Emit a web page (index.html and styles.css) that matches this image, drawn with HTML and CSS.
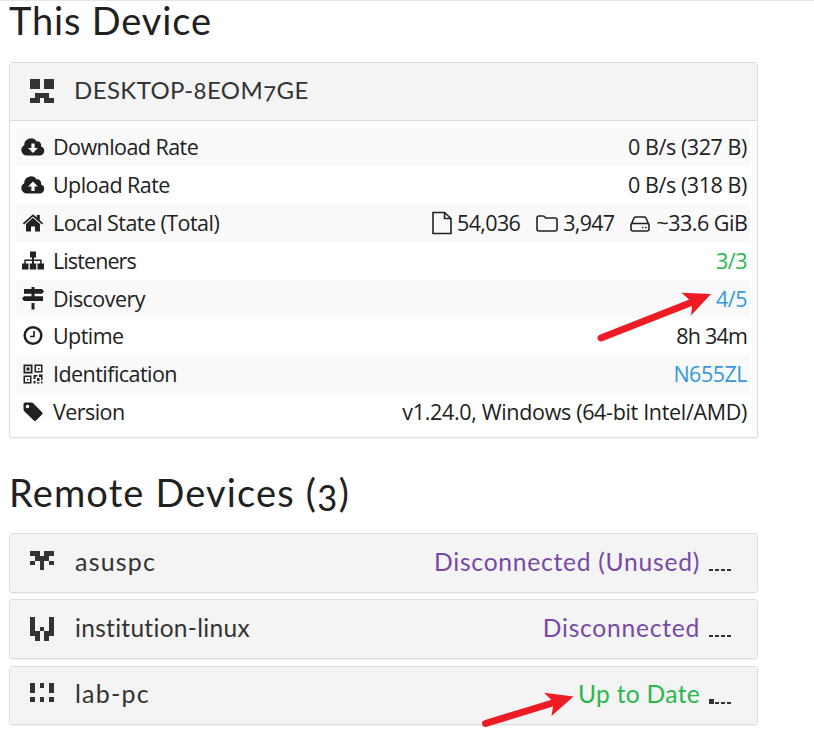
FILE: index.html
```html
<!DOCTYPE html>
<html lang="en">
<head>
<meta charset="utf-8">
<title>Devices</title>
<link rel="stylesheet" href="styles.css">
</head>
<body>
<main class="page">
  <h1 class="heading">This Device</h1>
  <section class="panel">
    <header class="panel-head device-head">
      <svg class="identicon" viewBox="0 0 5 5"><path d="M0 0h2v2H0zM3 0h2v2H3zM1 3h3v1h1v1H3V4H2v1H0V4h1z"/></svg>
      <span class="name host">DESKTOP-8EOM7GE</span>
    </header>
    <div class="rows">
      <div class="row"><svg class="icon cloud" viewBox="0 0 24 24"><path fill-rule="evenodd" d="M6 20.500a5.500 5.500 0 0 1-2.500-10.300A6.500 6.500 0 0 1 15.500 6.400a4 4 0 0 1 4.300 5.200A4.600 4.600 0 0 1 19 20.500zM10.400 8.500v4.500H7.200l4.800 4.900 4.800-4.900h-3.200V8.500z"/></svg><span class="label">Download Rate</span><span class="value rate">0 B/s (327 B)</span></div>
      <div class="row"><svg class="icon cloud" viewBox="0 0 24 24"><path fill-rule="evenodd" d="M6 20.500a5.500 5.500 0 0 1-2.500-10.300A6.500 6.500 0 0 1 15.500 6.400a4 4 0 0 1 4.300 5.200A4.600 4.600 0 0 1 19 20.500zM10.400 17.900v-4.500H7.200L12 8.500l4.800 4.900h-3.200v4.500z"/></svg><span class="label">Upload Rate</span><span class="value rate">0 B/s (318 B)</span></div>
      <div class="row"><svg class="icon" viewBox="0 0 24 24"><path d="M12 6.800l7 6.200v7.500h-5v-5h-4v5H5V13zM12 3.200l3.800 3.300V4h3v5.200l3.400 3-1.200 1.400L12 5.600l-9 8-1.200-1.400z"/></svg><span class="label">Local State (Total)</span><span class="value totals">
        <span class="total"><svg class="mini file" viewBox="0 0 20 24"><path d="M1 1.500h11.500l6.500 6V22.500H1zM12.500 1.500v6H19"/></svg><span class="files">54,036</span></span>
        <span class="total"><svg class="mini folder" viewBox="0 0 22 20"><path d="M1 4q0-2 2-2h4q2 0 2.500 2H19q2 0 2 2v9q0 2-2 2H3q-2 0-2-2z"/></svg><span class="folders">3,947</span></span>
        <span class="total"><svg class="mini drive" viewBox="0 0 20 20"><path d="M1 11v4q0 2 2 2h14q2 0 2-2v-4q0-1.500-2-1.500H3q-2 0-2 1.500l3-7Q4.500 3 6 3h8q1.500 0 2 1l3 7M12 13.500h1.500M15 13.500h1.500"/></svg><span>~33.6 GiB</span></span></span></div>
      <div class="row"><svg class="icon" viewBox="0 0 24 24"><path d="M9 2.500h6v6h-2v2h7.700v4H23v6h-6.500v-6h2.700V12H13v2.500h2.200v6H8.800v-6H11V12H4.800v2.500h2.700v6H1v-6h2.300v-4H11v-2H9z"/></svg><span class="label tight">Listeners</span><span class="value up">3/3</span></div>
      <div class="row"><svg class="icon" viewBox="0 0 24 24"><path d="M10.500 0h3v2H21l2 2.400-2 2.400H3V2h7.500zM10.500 6h3v3.200H22V14H3L1 11.600 3 9.200h7.500zM10.500 16h3v6.500h-3z"/></svg><span class="label">Discovery</span><span class="value link">4/5</span></div>
      <div class="row"><svg class="icon line" viewBox="0 0 24 24"><circle cx="12" cy="11.500" r="8.300"/><path class="hand" d="M13 7v5.500H9"/></svg><span class="label">Uptime</span><span class="value uptime">8h 34m</span></div>
      <div class="row"><svg class="icon" viewBox="0 0 24 24"><path fill-rule="evenodd" d="M2.500 2.500h9v9h-9zM4.200 4.200v5.600h5.600V4.200zM13.500 2.500h8v8h-8zM15 4v5h5V4zM2.500 13.500h8v8h-8zM4 15v5h5v-5zM5.500 5.500h3v3h-3zM17 6h1.500v1.500H17zM6 17h1.500v1.500H6zM12.500 13h4v1.500h-2V17h-2zM18 12.500h3.500V18H20v-3h-2zM16 16h2.500v3H16zM12.500 19h2v2.500h-2zM16 20.200h2.500v1.300H16zM20 19.500h1.500v2H20z"/></svg><span class="label">Identification</span><span class="value link">N655ZL</span></div>
      <div class="row"><svg class="icon" viewBox="0 0 24 24"><path fill-rule="evenodd" d="M2.500 4.200Q2.500 2.500 4.200 2.500H10q1.400 0 2.500 1.100l8.600 8.600q1 1.100 0 2.200L15 20.500q-1.100 1-2.200 0L3.700 11.700Q2.500 10.500 2.500 9zM6.500 4.700a1.800 1.800 0 1 0 0 3.600 1.800 1.800 0 0 0 0-3.600z"/></svg><span class="label">Version</span><span class="value version">v1.24.0, Windows (64-bit Intel/AMD)</span></div>
    </div>
  </section>

  <h1 class="heading remote-heading">Remote Devices (3)</h1>
  <div class="remotes">
    <section class="panel"><div class="panel-head">
      <svg class="identicon" viewBox="0 0 5 5"><path d="M0 0h2v1H0zM3 0h2v1H3zM1 1h3v1H3v2H2V2H1zM0 2h1v1H0zM4 2h1v1H4z"/></svg>
      <span class="name wide">asuspc</span><span class="status off">Disconnected (Unused)</span>
      <svg class="signal" viewBox="0 0 24 6"><path d="M0 3h4v2H0zM6 3h4v2H6zM12 3h4v2h-4zM18 3h4v2h-4z"/></svg>
    </div></section>
    <section class="panel"><div class="panel-head">
      <svg class="identicon" viewBox="0 0 5 5"><path d="M0 0h1v3h1v2H1V4H0zM4 0h1v4H4v1H3V3h1zM2 2h1v1H2z"/></svg>
      <span class="name long">institution-linux</span><span class="status off">Disconnected</span>
      <svg class="signal" viewBox="0 0 24 6"><path d="M0 3h4v2H0zM6 3h4v2H6zM12 3h4v2h-4zM18 3h4v2h-4z"/></svg>
    </div></section>
    <section class="panel"><div class="panel-head last-head">
      <svg class="identicon" viewBox="0 0 5 5"><path d="M0 0h1v2H0zM2 0h1v1H2zM4 0h1v2H4zM0 3h1v.9H0zM2 3h1v.9H2zM4 3h1v.9H4z"/></svg>
      <span class="name wide">lab-pc</span><span class="status up synced">Up to Date</span>
      <svg class="signal" viewBox="0 0 24 6"><path d="M0 0h5v5H0zM6 3h4v2H6zM12 3h4v2h-4zM18 3h4v2h-4z"/></svg>
    </div></section>
  </div>
</main>
<svg class="arrows" viewBox="0 0 814 746">
  <path class="shaft" d="M601 338L690 303M485.500 723.500L551 703.500"/>
  <path d="M711 294L681.500 292.700 689 299.500 692 306.500 691 315.500zM573.500 696.500L544 692.700 551 699.500 553 706.500 551.500 716z"/>
</svg>
</body>
</html>
```

FILE: styles.css
```css
* { box-sizing: border-box; }
body {
  margin: 0;
  height: 746px;
  overflow: hidden;
  background: #fff;
  color: #212121;
  border-top: 1px solid #e7e7e7;
  font: 21.5px/30px "Open Sans", "Noto Sans", sans-serif;
}
.page { width: 758px; padding-left: 9px; }
.heading {
  margin: 0;
  height: 61px;
  font: 400 38px/38px Lato, sans-serif;
  letter-spacing: .85px;
  white-space: nowrap;
  font-variant-numeric: oldstyle-nums;
}
.remote-heading { height: 95px; padding-top: 35px; letter-spacing: 1.15px; }
.panel {
  border: 1px solid #ddd;
  border-radius: 3px;
  box-shadow: 0 1px 1px rgba(0, 0, 0, .06);
}
.panel-head {
  display: flex;
  height: 58px;
  padding: 0 25px 0 20px;
  background: #f4f4f4;
  color: #333;
  font: 24px/56px Lato, sans-serif;
  font-variant-numeric: oldstyle-nums;
  white-space: nowrap;
}
.device-head { border-bottom: 1px solid #ddd; line-height: 54px; }
.last-head { height: 57px; line-height: 54px; }
.identicon { width: 24px; height: 24px; margin-top: 17px; margin-right: 21px; fill: #333; flex: none; shape-rendering: crispEdges; }
.device-head .identicon { margin-top: 16px; margin-right: 20px; }
.last-head .identicon { margin-top: 16px; }
.host { letter-spacing: .4px; }
.wide { font-size: 25px; letter-spacing: 1.2px; line-height: 55px; }
.last-head .wide { line-height: 53px; }
.long { font-size: 24.500px; letter-spacing: .3px; }
.status { margin-left: auto; margin-right: -1px; font-size: 24.600px; letter-spacing: .75px; }
.synced { letter-spacing: .3px; }
.signal { width: 24px; height: 6px; margin: 32px 0 0 10px; fill: #333; shape-rendering: crispEdges; }
.panel-head .signal { margin-right: -1px; }
.remotes { display: grid; row-gap: 6.200px; }
.rows { padding: 7.100px 7px 6.200px 6px; }
.row { display: flex; height: 37.860px; padding: 0 3px 0 5px; line-height: 38px; white-space: nowrap; }
.row:nth-child(odd) { background: #f9f9f9; }
.icon { width: 24px; height: 24px; margin: 7px 8px 0 0; fill: #212121; flex: none; }
.cloud { transform: scale(1.03, 1); }
.line { fill: none; stroke: #212121; stroke-width: 2.500; }
.hand { stroke-width: 1.700; }
.label { letter-spacing: -.55px; }
.tight { letter-spacing: -.9px; }
.value { margin-left: auto; letter-spacing: -.5px; }
.rate { letter-spacing: -.42px; }
.uptime { letter-spacing: -.8px; }
.version { letter-spacing: -.33px; }
.totals { display: flex; gap: 16px; margin-right: -.3px; }
.total { display: flex; gap: 5px; }
.total:last-child { gap: 6px; }
.files { letter-spacing: -.65px; }
.folders { letter-spacing: -.7px; }
.mini { fill: none; stroke: #212121; stroke-width: 1.600; }
.file { width: 20px; height: 24px; margin-top: 7px; }
.folder { width: 22px; height: 20px; margin-top: 10px; }
.drive { width: 20px; height: 20px; margin-top: 10px; }
.up { color: #29b74e; }
.link { color: #3498db; }
.off { color: #7749a5; }
.arrows { position: absolute; left: 0; top: 0; width: 814px; height: 746px; fill: #ed1c24; pointer-events: none; }
.shaft { fill: none; stroke: #ed1c24; stroke-width: 7; stroke-linecap: round; }
```
